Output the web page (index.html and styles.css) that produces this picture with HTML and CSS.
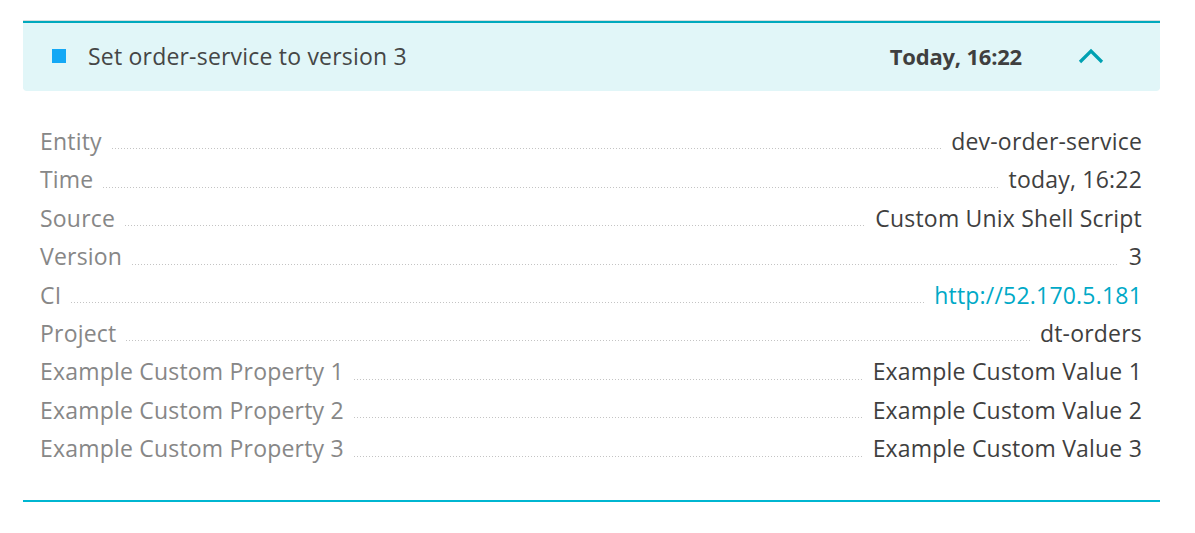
FILE: index.html
```html
<!DOCTYPE html>
<html>
<head>
<meta charset="utf-8">
<link rel="stylesheet" href="styles.css">
</head>
<body>
<div class="panel">
  <div class="header">
    <span class="marker"></span>
    <span class="title">Set order-service to version 3</span>
    <span class="when">Today, 16:22</span>
    <svg class="chevron" width="26" height="16" viewBox="0 0 26 16"><path d="M2 14 L13 3 L24 14" fill="none" stroke="#00a1b2" stroke-width="3.2"/></svg>
  </div>
  <div class="details">
    <div class="row"><span class="label">Entity</span><span class="leader"></span><span class="value">dev-order-service</span></div>
    <div class="row"><span class="label">Time</span><span class="leader"></span><span class="value">today, 16:22</span></div>
    <div class="row"><span class="label">Source</span><span class="leader"></span><span class="value">Custom Unix Shell Script</span></div>
    <div class="row"><span class="label">Version</span><span class="leader"></span><span class="value">3</span></div>
    <div class="row"><span class="label">CI</span><span class="leader"></span><span class="value link">http://52.170.5.181</span></div>
    <div class="row"><span class="label">Project</span><span class="leader"></span><span class="value">dt-orders</span></div>
    <div class="row"><span class="label">Example Custom Property 1</span><span class="leader"></span><span class="value">Example Custom Value 1</span></div>
    <div class="row"><span class="label">Example Custom Property 2</span><span class="leader"></span><span class="value">Example Custom Value 2</span></div>
    <div class="row"><span class="label">Example Custom Property 3</span><span class="leader"></span><span class="value">Example Custom Value 3</span></div>
  </div>
</div>
</body>
</html>
```
FILE: styles.css
```css
html, body {
  margin: 0;
  padding: 0;
  background: #ffffff;
}
body {
  font-family: "Open Sans", "Noto Sans", sans-serif;
  color: #454646;
}
.panel {
  margin: 21px 0 0 23px;
  width: 1137px;
}
.header {
  box-sizing: border-box;
  height: 70px;
  border-top: 2px solid #00a9bd;
  box-shadow: 0 -1px 0 #d8dcdc;
  background: #e1f6f8;
  border-radius: 0 0 4px 4px;
  display: flex;
  align-items: center;
  padding: 0 56px 3px 29px;
}
.marker {
  width: 14px;
  height: 14px;
  background: #14a8f5;
  margin-right: 22px;
  flex: none;
}
.title {
  font-size: 23px;
  letter-spacing: 0.2px;
  flex: 1;
  color: #454646;
}
.when {
  font-size: 22px;
  font-weight: 700;
  letter-spacing: -0.2px;
  color: #3f3f3f;
  margin-right: 56px;
}
.chevron {
  display: block;
  flex: none;
}
.details {
  padding: 31px 18px 32px 17px;
  border-bottom: 2px solid #00b6d1;
}
.row {
  display: flex;
  align-items: flex-end;
  height: 38.4px;
  line-height: 38.4px;
  font-size: 23px;
  letter-spacing: 0.2px;
  white-space: nowrap;
}
.label {
  color: #878787;
}
.value {
  color: #3f3f3f;
}
.value.link {
  color: #00a9c7;
}
.leader {
  flex: 1;
  height: 1px;
  margin: 0 10px 11px 10px;
  background-image: linear-gradient(to right, #c4c4c4 1px, transparent 1px);
  background-size: 3px 1px;
  background-repeat: repeat-x;
}
```
